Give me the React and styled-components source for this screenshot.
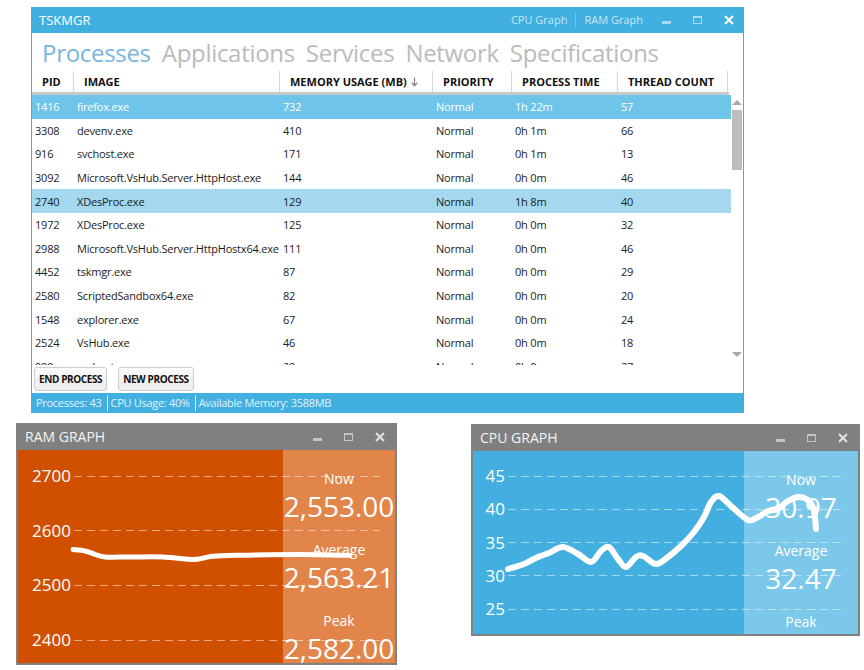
import React from "react";
import styled, { createGlobalStyle } from "styled-components";

const GlobalStyle = createGlobalStyle`
  html, body {
    margin: 0;
    background: #fff;
  }
  body {
    font-family: "Open Sans", "Noto Sans", sans-serif;
  }
  * {
    box-sizing: border-box;
  }
`;

const BLUE = "#41afe0";

const Desktop = styled.div`
  width: 864px;
  height: 670px;
  padding-top: 7px;
  overflow: hidden;
`;

/* ---------- main window ---------- */

const MainWindow = styled.div`
  margin-left: 31px;
  width: 713px;
  display: flex;
  flex-direction: column;
  border-left: 1px solid ${BLUE};
  border-right: 1px solid ${BLUE};
  background: #fff;
`;

const TitleBar = styled.div`
  height: 26px;
  margin: 0 -1px;
  display: flex;
  align-items: center;
  padding-left: 8px;
  background: ${BLUE};
`;

const AppTitle = styled.div`
  flex: 1;
  color: #fff;
  font-size: 13px;
`;

const TitleLink = styled.span`
  color: #c6e7f6;
  font-size: 11px;
  line-height: 14px;
  padding: 0 8px;
  & + & {
    border-left: 1px solid #79c6ea;
  }
`;

const WinButton = styled.div`
  width: 31px;
  height: 100%;
  display: flex;
  align-items: center;
  justify-content: center;
  &:first-of-type {
    margin-left: 2px;
  }
`;

const MinIcon = styled.div`
  width: 9px;
  height: 3px;
  margin-top: 5px;
  background: ${(p) => p.$color};
`;

const MaxIcon = styled.div`
  width: 9px;
  height: 8px;
  border: 1px solid ${(p) => p.$color};
  border-top-width: 2px;
`;

const Tabs = styled.div`
  height: 38px;
  display: flex;
  align-items: center;
  gap: 11px;
  padding-left: 10px;
`;

const Tab = styled.span`
  font-size: 24px;
  letter-spacing: -0.3px;
  color: ${(p) => (p.$active ? "#78b5df" : "#bbbbbb")};
`;

const COLS = "42px 206px 153px 79px 106px 110px";

const HeaderRow = styled.div`
  display: grid;
  grid-template-columns: ${COLS};
  width: 697px;
  height: 24px;
  border-bottom: 3px solid #cacaca;
`;

const HeaderCell = styled.div`
  display: flex;
  align-items: center;
  gap: 4px;
  padding-left: 10px;
  border-right: 1px solid #d6d6d6;
  font-size: 11px;
  font-weight: 700;
  color: #111;
  white-space: nowrap;
`;

const ListArea = styled.div`
  display: flex;
  height: 270px;
`;

const Rows = styled.div`
  width: 699px;
  height: 270px;
  overflow: hidden;
`;

const Row = styled.div`
  display: grid;
  grid-template-columns: ${COLS};
  height: 23.6px;
  align-items: center;
  background: ${(p) =>
    p.$state === "selected" ? "#6fc4e9" : p.$state === "hover" ? "#a3d8ef" : "transparent"};
  color: ${(p) => (p.$state === "selected" ? "#fff" : "#1b1b1b")};
`;

const Cell = styled.div`
  padding-left: 3px;
  font-size: 11px;
  letter-spacing: -0.2px;
  white-space: nowrap;
`;

const Scrollbar = styled.div`
  width: 12px;
  display: flex;
  flex-direction: column;
  align-items: center;
  padding: 5px 0 8px;
`;

const ArrowUp = styled.div`
  width: 0;
  height: 0;
  border-left: 5px solid transparent;
  border-right: 5px solid transparent;
  border-bottom: 5px solid #a8a8a8;
`;

const ArrowDown = styled(ArrowUp)`
  border-bottom: none;
  border-top: 5px solid #a8a8a8;
  margin-top: auto;
`;

const Thumb = styled.div`
  width: 10px;
  height: 60px;
  margin-top: 5px;
  background: #bdbdbd;
`;

const ButtonRow = styled.div`
  height: 28px;
  display: flex;
  align-items: center;
  gap: 11px;
  padding-left: 2px;
`;

const Button = styled.div`
  height: 24px;
  padding: 0 4px;
  display: flex;
  align-items: center;
  border: 1px solid #cdcdcd;
  border-radius: 3px;
  background: linear-gradient(#fbfbfb, #ececec);
  font-size: 10px;
  font-weight: 700;
  letter-spacing: -0.4px;
  color: #111;
`;

const StatusBar = styled.div`
  height: 20px;
  margin: 0 -1px;
  display: flex;
  align-items: center;
  padding-left: 2px;
  background: ${BLUE};
`;

const StatusItem = styled.span`
  padding: 0 5px 0 3px;
  line-height: 16px;
  font-size: 11px;
  letter-spacing: -0.3px;
  color: #e2f3fb;
  & + & {
    border-left: 1px solid #e2f3fb;
  }
`;

/* ---------- graph windows ---------- */

const GraphRow = styled.div`
  display: flex;
  align-items: flex-start;
  gap: 74px;
  margin-top: 10px;
  padding-left: 16px;
`;

const GraphWindow = styled.div`
  width: ${(p) => p.$width}px;
  margin-top: ${(p) => p.$offset || 0}px;
  border: 2px solid #808080;
  border-top: none;
`;

const GraphTitleBar = styled.div`
  height: 27px;
  display: flex;
  align-items: center;
  padding-left: 7px;
  background: #808080;
`;

const GraphTitle = styled.div`
  flex: 1;
  font-size: 14px;
  color: #f4f4f4;
`;

const GraphBody = styled.div`
  display: grid;
  grid-template-columns: ${(p) => p.$plotWidth}px 1fr;
  grid-template-rows: ${(p) => p.$height}px;
`;

const PlotBg = styled.div`
  grid-area: 1 / 1 / 2 / 2;
  background: ${(p) => p.$color};
`;

const Panel = styled.div`
  grid-area: 1 / 2 / 2 / 3;
  display: flex;
  flex-direction: column;
  align-items: center;
  gap: 17px;
  padding-top: 20px;
  background: ${(p) => p.$color};
  overflow: hidden;
`;

const Stat = styled.div`
  display: flex;
  flex-direction: column;
  align-items: center;
  color: #fff;
`;

const StatLabel = styled.div`
  font-size: 14px;
  line-height: 18px;
`;

const StatValue = styled.div`
  font-size: 28px;
  line-height: 36px;
`;

const Axis = styled.div`
  grid-area: 1 / 1 / 2 / 3;
  display: flex;
  flex-direction: column;
  padding-top: ${(p) => p.$padTop}px;
  padding-left: ${(p) => p.$padLeft}px;
  padding-right: ${(p) => p.$padRight}px;
  gap: ${(p) => p.$gap}px;
`;

const AxisRow = styled.div`
  height: 20px;
  display: flex;
  align-items: center;
`;

const AxisLabel = styled.div`
  width: ${(p) => p.$width}px;
  text-align: right;
  font-size: 17px;
  line-height: 20px;
  color: #fff;
`;

const Dash = styled.div`
  flex: 1;
  height: 1px;
  margin-left: 3px;
  background: repeating-linear-gradient(
    90deg,
    rgba(255, 255, 255, 0.5) 0 8px,
    transparent 8px 13px
  );
`;

const Chart = styled.svg`
  grid-area: 1 / 1 / 2 / 3;
  display: block;
`;

function smoothPath(pts) {
  let d = `M${pts[0][0]},${pts[0][1]}`;
  for (let i = 0; i < pts.length - 1; i++) {
    const p0 = pts[i - 1] || pts[i];
    const p1 = pts[i];
    const p2 = pts[i + 1];
    const p3 = pts[i + 2] || p2;
    const c1 = [p1[0] + (p2[0] - p0[0]) / 6, p1[1] + (p2[1] - p0[1]) / 6];
    const c2 = [p2[0] - (p3[0] - p1[0]) / 6, p2[1] - (p3[1] - p1[1]) / 6];
    d += ` C${c1[0]},${c1[1]} ${c2[0]},${c2[1]} ${p2[0]},${p2[1]}`;
  }
  return d;
}

function CloseIcon({ color }) {
  return (
    <svg width="10" height="10" viewBox="0 0 10 10">
      <path d="M1 1L9 9M9 1L1 9" stroke={color} strokeWidth="2" />
    </svg>
  );
}

function SortArrow() {
  return (
    <svg width="7" height="10" viewBox="0 0 7 10">
      <path d="M3.5 0.5V8.5M0.8 5.8L3.5 8.8L6.2 5.8" stroke="#8a8a8a" strokeWidth="1.3" fill="none" />
    </svg>
  );
}

function Controls({ min, max, close }) {
  return (
    <>
      <WinButton>
        <MinIcon $color={min} />
      </WinButton>
      <WinButton>
        <MaxIcon $color={max} />
      </WinButton>
      <WinButton>
        <CloseIcon color={close} />
      </WinButton>
    </>
  );
}

const processes = [
  ["1416", "firefox.exe", "732", "Normal", "1h 22m", "57", "selected"],
  ["3308", "devenv.exe", "410", "Normal", "0h 1m", "66"],
  ["916", "svchost.exe", "171", "Normal", "0h 1m", "13"],
  ["3092", "Microsoft.VsHub.Server.HttpHost.exe", "144", "Normal", "0h 0m", "46"],
  ["2740", "XDesProc.exe", "129", "Normal", "1h 8m", "40", "hover"],
  ["1972", "XDesProc.exe", "125", "Normal", "0h 0m", "32"],
  ["2988", "Microsoft.VsHub.Server.HttpHostx64.exe", "111", "Normal", "0h 0m", "46"],
  ["4452", "tskmgr.exe", "87", "Normal", "0h 0m", "29"],
  ["2580", "ScriptedSandbox64.exe", "82", "Normal", "0h 0m", "20"],
  ["1548", "explorer.exe", "67", "Normal", "0h 0m", "24"],
  ["2524", "VsHub.exe", "46", "Normal", "0h 0m", "18"],
  ["980", "svchost.exe", "28", "Normal", "0h 0m", "27"],
];

const ramGraph = {
  title: "RAM GRAPH",
  width: 381,
  offset: 0,
  bodyWidth: 377,
  height: 213,
  plotWidth: 265,
  plot: "#d05000",
  panel: "#e1854b",
  axis: { labels: ["2700", "2600", "2500", "2400"], padTop: 16, gap: 34.7, padLeft: 13, padRight: 15, labelWidth: 40 },
  stats: [["Now", "2,553.00"], ["Average", "2,563.21"], ["Peak", "2,582.00"]],
  stroke: 5,
  points: [
    [55, 99.6], [67, 101], [77, 104.3], [87, 107], [112, 107], [145, 107],
    [167, 109], [179, 109.3], [195, 106.3], [222, 105.3], [282, 104.6], [332, 105.3],
  ],
};

const cpuGraph = {
  title: "CPU GRAPH",
  width: 389,
  offset: 1,
  bodyWidth: 385,
  height: 183,
  plotWidth: 271,
  plot: "#42afe0",
  panel: "#7cc8ea",
  axis: { labels: ["45", "40", "35", "30", "25"], padTop: 15, gap: 13.25, padLeft: 12, padRight: 12, labelWidth: 20 },
  stats: [["Now", "30.97"], ["Average", "32.47"], ["Peak", ""]],
  stroke: 6,
  points: [
    [35, 118], [51, 113], [65, 106], [76, 102], [90, 96], [105, 103], [118, 111],
    [128, 100], [136, 96], [145, 108], [153, 116], [163, 106], [170, 105], [183, 113],
    [195, 106], [208, 95], [221, 81], [231, 66], [238, 51], [246, 45], [258, 55],
    [275, 69], [285, 66], [295, 60], [305, 58], [315, 50], [326, 46], [336, 50],
    [341, 60], [343, 78],
  ],
};

function Graph({ g }) {
  return (
    <GraphWindow $width={g.width} $offset={g.offset}>
      <GraphTitleBar>
        <GraphTitle>{g.title}</GraphTitle>
        <Controls min="#c4c4c4" max="#c4c4c4" close="#e2e2e2" />
      </GraphTitleBar>
      <GraphBody $plotWidth={g.plotWidth} $height={g.height}>
        <PlotBg $color={g.plot} />
        <Panel $color={g.panel}>
          {g.stats.map(([label, value]) => (
            <Stat key={label}>
              <StatLabel>{label}</StatLabel>
              <StatValue>{value}</StatValue>
            </Stat>
          ))}
        </Panel>
        <Axis
          $padTop={g.axis.padTop}
          $gap={g.axis.gap}
          $padLeft={g.axis.padLeft}
          $padRight={g.axis.padRight}
        >
          {g.axis.labels.map((l) => (
            <AxisRow key={l}>
              <AxisLabel $width={g.axis.labelWidth}>{l}</AxisLabel>
              <Dash />
            </AxisRow>
          ))}
        </Axis>
        <Chart width={g.bodyWidth} height={g.height} viewBox={`0 0 ${g.bodyWidth} ${g.height}`}>
          <path
            d={smoothPath(g.points)}
            fill="none"
            stroke="#fff"
            strokeWidth={g.stroke}
            strokeLinecap="round"
            strokeLinejoin="round"
          />
        </Chart>
      </GraphBody>
    </GraphWindow>
  );
}

export default function App() {
  return (
    <Desktop>
      <GlobalStyle />
      <MainWindow>
        <TitleBar>
          <AppTitle>TSKMGR</AppTitle>
          <TitleLink>CPU Graph</TitleLink>
          <TitleLink>RAM Graph</TitleLink>
          <Controls min="#a9dcf2" max="#a9dcf2" close="#fff" />
        </TitleBar>
        <Tabs>
          <Tab $active>Processes</Tab>
          <Tab>Applications</Tab>
          <Tab>Services</Tab>
          <Tab>Network</Tab>
          <Tab>Specifications</Tab>
        </Tabs>
        <HeaderRow>
          <HeaderCell>PID</HeaderCell>
          <HeaderCell>IMAGE</HeaderCell>
          <HeaderCell>
            MEMORY USAGE (MB)
            <SortArrow />
          </HeaderCell>
          <HeaderCell>PRIORITY</HeaderCell>
          <HeaderCell>PROCESS TIME</HeaderCell>
          <HeaderCell>THREAD COUNT</HeaderCell>
        </HeaderRow>
        <ListArea>
          <Rows>
            {processes.map((p) => (
              <Row key={p[0]} $state={p[6]}>
                {p.slice(0, 6).map((v, i) => (
                  <Cell key={i}>{v}</Cell>
                ))}
              </Row>
            ))}
          </Rows>
          <Scrollbar>
            <ArrowUp />
            <Thumb />
            <ArrowDown />
          </Scrollbar>
        </ListArea>
        <ButtonRow>
          <Button>END PROCESS</Button>
          <Button>NEW PROCESS</Button>
        </ButtonRow>
        <StatusBar>
          <StatusItem>Processes: 43</StatusItem>
          <StatusItem>CPU Usage: 40%</StatusItem>
          <StatusItem>Available Memory: 3588MB</StatusItem>
        </StatusBar>
      </MainWindow>
      <GraphRow>
        <Graph g={ramGraph} />
        <Graph g={cpuGraph} />
      </GraphRow>
    </Desktop>
  );
}
